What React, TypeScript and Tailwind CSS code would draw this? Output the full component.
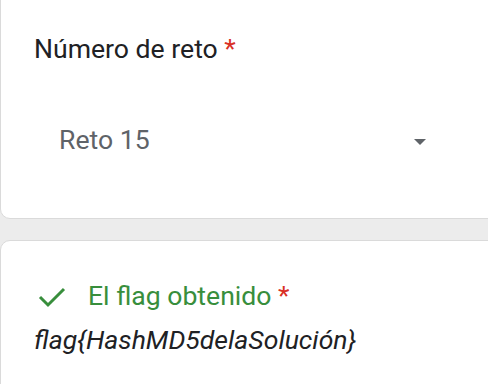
import React from "react";

export default function App() {
  return (
    <div className="w-[488px] h-[384px] overflow-hidden bg-[#ececec] relative" style={{ fontFamily: "Roboto, 'Liberation Sans', sans-serif" }}>
      <div className="w-[520px] h-[229px] -mt-[10px] bg-white border border-[#dadada] rounded-[10px] pt-[41px] pl-[33px]">
        <div className="text-[26.6px] leading-[34px] text-[#202124]">
          Número de reto <span className="text-[#d93025]">*</span>
        </div>
        <div className="mt-[57px] pl-[25px] w-[392px] flex items-center justify-between h-[34px]">
          <span className="text-[26.6px] leading-[34px] text-[#5f6368]">Reto 15</span>
          <svg width="12" height="6" viewBox="0 0 12 6" className="mt-[3px]">
            <path d="M0 0 L12 0 L6 6 Z" fill="#5f6368" />
          </svg>
        </div>
      </div>
      <div className="w-[520px] h-[200px] mt-[21px] bg-white border border-[#dadada] rounded-[10px] pt-[38px] pl-[33px]">
        <div className="flex items-center gap-[22px] text-[26.6px] leading-[34px] text-[#388e3c]">
          <svg width="30" height="22" viewBox="0 0 30 22" className="ml-[3px] mt-[2px]">
            <path d="M3 11 L11 19 L27 3" fill="none" stroke="#388e3c" strokeWidth="3" />
          </svg>
          <span className="-ml-[1px]">
            El flag obtenido <span className="text-[#d93025]">*</span>
          </span>
        </div>
        <div className="mt-[10px] text-[26.6px] leading-[34px] italic text-[#202124]">flag{"{"}HashMD5delaSolución{"}"}</div>
      </div>
    </div>
  );
}
